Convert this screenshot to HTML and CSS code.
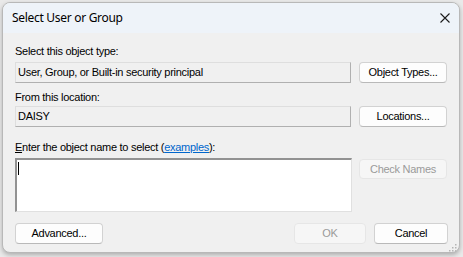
FILE: index.html
```html
<!DOCTYPE html>
<html>
<head>
<meta charset="utf-8">
<link rel="stylesheet" href="styles.css">
</head>
<body>
<div class="window">
  <div class="titlebar">
    <span class="title">Select User or Group</span>
    <svg class="close" width="10" height="10" viewBox="0 0 10 10"><path d="M0.5 0.5 L9.5 9.5 M9.5 0.5 L0.5 9.5" stroke="#1b1b1b" stroke-width="1.1" fill="none"/></svg>
  </div>
  <div class="content">
    <div class="label l1">Select this object type:</div>
    <div class="row">
      <div class="field">User, Group, or Built-in security principal</div>
      <button class="btn side">Object Types...</button>
    </div>
    <div class="label l2">From this location:</div>
    <div class="row">
      <div class="field">DAISY</div>
      <button class="btn side">Locations...</button>
    </div>
    <div class="label l3"><u>E</u>nter the object name to select (<a class="link">examples</a>):</div>
    <div class="row row3">
      <div class="textarea"><span class="caret"></span></div>
      <button class="btn side disabled short">Check Names</button>
    </div>
    <div class="footer">
      <button class="btn adv">Advanced...</button>
      <div class="spacer"></div>
      <button class="btn ok disabled">OK</button>
      <button class="btn cancel">Cancel</button>
    </div>
    <svg class="grip" width="9" height="9" viewBox="0 0 9 9">
      <rect x="7" y="1" width="1.5" height="1.5" fill="#b4b4b4"/>
      <rect x="4" y="4" width="1.5" height="1.5" fill="#b4b4b4"/>
      <rect x="7" y="4" width="1.5" height="1.5" fill="#b4b4b4"/>
      <rect x="1" y="7" width="1.5" height="1.5" fill="#b4b4b4"/>
      <rect x="4" y="7" width="1.5" height="1.5" fill="#b4b4b4"/>
      <rect x="7" y="7" width="1.5" height="1.5" fill="#b4b4b4"/>
    </svg>
  </div>
</div>
</body>
</html>
```
FILE: styles.css
```css
html, body {
  margin: 0;
  padding: 0;
}
body {
  background: #e9e9e9;
  width: 463px;
  height: 257px;
  overflow: hidden;
  font-family: "Liberation Sans", Arial, sans-serif;
  font-size: 11px;
  letter-spacing: -0.28px;
  color: #000;
}
.window {
  margin: 2px 0 0 2px;
  width: 458px;
  height: 251px;
  box-sizing: border-box;
  border: 1px solid #b8b8b8;
  border-radius: 8px;
  overflow: hidden;
  display: flex;
  flex-direction: column;
  background: #f0f0f0;
  box-shadow: 0 2px 4px rgba(0,0,0,0.25);
}
.titlebar {
  height: 30px;
  flex: none;
  background: #eef3f9;
  display: flex;
  align-items: center;
  padding: 0 9px 0 9px;
}
.title {
  font-family: "Noto Sans", "Open Sans", sans-serif;
  font-size: 12px;
  letter-spacing: -0.3px;
  color: #000;
  flex: 1;
  margin-top: -1px;
}
.close {
  display: block;
  margin-top: -1px;
}
.content {
  flex: 1;
  position: relative;
  padding: 12px 12px 0 12px;
  display: flex;
  flex-direction: column;
}
.label {
  height: 13px;
  line-height: 13px;
  padding-left: 0;
}
.l1 { margin-bottom: 4px; }
.l2 { margin-top: 8px; margin-bottom: 2px; }
.l3 { margin-top: 14px; margin-bottom: 4px; }
.link {
  color: #0066cc;
  text-decoration: underline;
}
.row {
  display: flex;
  align-items: flex-start;
}
.field {
  width: 336px;
  height: 21px;
  box-sizing: border-box;
  border: 1px solid #dedede;
  border-right-color: #b0b0b0;
  border-bottom-color: #b0b0b0;
  line-height: 19px;
  padding-left: 2px;
  background: #f0f0f0;
}
.btn {
  font-family: "Liberation Sans", Arial, sans-serif;
  font-size: 11px;
  letter-spacing: -0.28px;
  color: #000;
  background: #fdfdfd;
  border: 1px solid #d2d2d2;
  border-bottom-color: #b9b9b9;
  border-radius: 4px;
  height: 21px;
  padding: 0;
  margin: 0;
  line-height: 19px;
  box-sizing: border-box;
}
.side {
  width: 88px;
  margin-left: 8px;
}
.short {
  height: 20px;
  margin-top: 1px;
}
.disabled {
  background: #f6f6f6;
  border-color: #e6e6e6;
  color: #9a9a9a;
}
.textarea {
  width: 337px;
  height: 54px;
  box-sizing: border-box;
  border-top: 2px solid #929292;
  border-left: 2px solid #929292;
  border-right: 1px solid #e0e0e0;
  border-bottom: 1px solid #e0e0e0;
  background: #fff;
  padding: 2px 0 0 1px;
}
.caret {
  display: block;
  width: 1px;
  height: 13px;
  background: #000;
}
.row3 .side { margin-left: 7px; }
.footer {
  display: flex;
  margin-top: 11px;
}
.spacer { flex: 1; }
.adv { width: 88px; }
.ok { width: 72px; }
.cancel { width: 74px; margin-left: 8px; margin-right: -1px; }
.grip {
  position: absolute;
  right: 2px;
  bottom: 0px;
}
```
